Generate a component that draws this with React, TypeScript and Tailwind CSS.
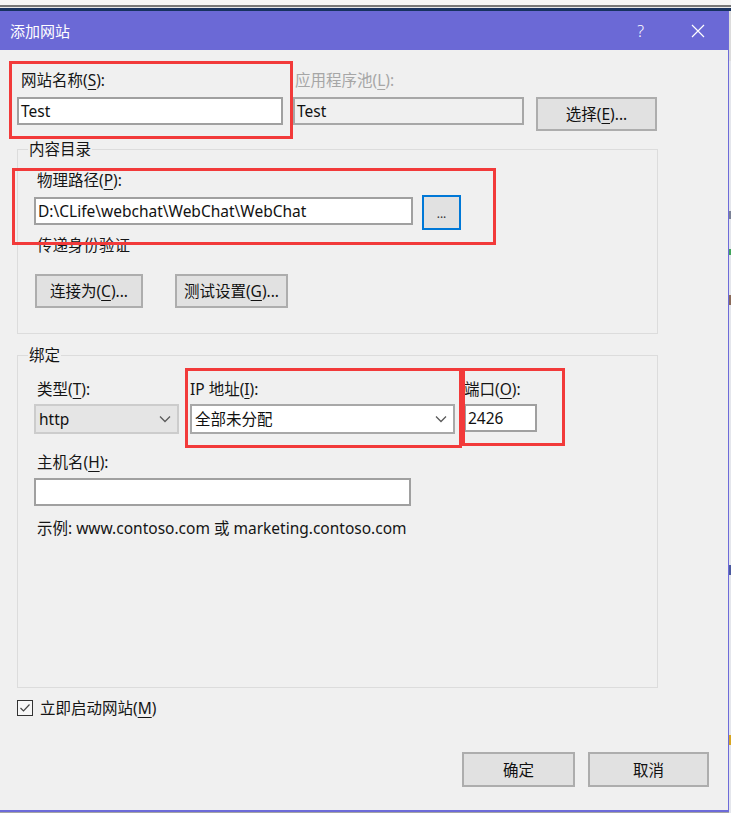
import React from "react";

const U = ({ c }: { c: string }) => (
  <span className="underline decoration-1 underline-offset-[3px]">{c}</span>
);

const Chevron = () => (
  <svg width="12" height="8" viewBox="0 0 12 8" className="shrink-0">
    <polyline points="1,1.5 6,6.5 11,1.5" fill="none" stroke="#5a5a5a" strokeWidth="1.3" />
  </svg>
);

const Btn = ({ w, children, cls = "" }: { w: string; children: React.ReactNode; cls?: string }) => (
  <div
    className={`${w} h-[34px] flex items-center justify-center bg-[#e1e1e1] border-2 border-[#adadad] text-[15.5px] text-[#111] ${cls}`}
  >
    {children}
  </div>
);

export default function App() {
  return (
    <div className="relative w-[731px] h-[813px] overflow-hidden bg-[#f0f0f0] flex flex-col font-['Noto_Sans','Noto_Sans_CJK_SC',sans-serif] text-[15.5px] leading-[20px] text-[#151515]">
      {/* top screen strips */}
      <div className="h-[5px] bg-[#f5f5f5]" />
      <div className="h-[2px] bg-[#777777]" />
      <div className="h-[1px] bg-[#e9e9e9]" />
      <div className="h-[3px] bg-[#17325f]" />

      <div className="flex flex-1 min-h-0">
        <div className="w-[729px] flex flex-col">
          <div className="flex-1 flex flex-col border-r border-b-2 border-[#6d6bd9]">
            {/* title bar */}
            <div className="h-[39px] bg-[#6b69d6] flex items-center pl-[10px] text-white">
              <span className="text-[15px]">添加网站</span>
              <span className="ml-auto mr-[47px] text-[16px] font-light">?</span>
              <svg width="14" height="14" viewBox="0 0 14 14" className="mr-[23px]">
                <path d="M1 1 L13 13 M13 1 L1 13" stroke="#ffffff" strokeWidth="1.2" />
              </svg>
            </div>

            {/* body */}
            <div className="flex-1 flex flex-col pl-[17px] pr-[19px] pt-[20px] bg-[#f0f0f0]">
              {/* site name row */}
              <div className="flex items-start">
                <div className="w-[266px] flex flex-col">
                  <div className="h-[20px] pl-[4px]">
                    网站名称(<U c="S" />):
                  </div>
                  <div className="mt-[7px] h-[28px] bg-white border-2 border-[#a0a0a0] flex items-center pl-[2px] text-[#111]">
                    Test
                  </div>
                </div>
                <div className="ml-[10px] w-[231px] flex flex-col">
                  <div className="h-[20px] pl-[2px] text-[#a6a6a6]">
                    应用程序池(<U c="L" />):
                  </div>
                  <div className="mt-[7px] h-[28px] border-2 border-[#a7a7a7] flex items-center pl-[2px] text-[#111]">
                    Test
                  </div>
                </div>
                <Btn w="w-[121px]" cls="ml-[12px] mt-[27px]">
                  选择(<U c="E" />)...
                </Btn>
              </div>

              {/* 内容目录 group */}
              <div className="relative mt-[18px] w-[641px] h-[185px] border border-[#dcdcdc] pl-[16px] pt-[20px]">
                <span className="absolute -top-[11px] left-[10px] px-[1px] bg-[#f0f0f0]">内容目录</span>
                <div className="h-[20px] pl-[3px]">
                  物理路径(<U c="P" />):
                </div>
                <div className="mt-[5px] flex items-start">
                  <div className="mt-[2px] w-[379px] h-[28px] bg-white border-2 border-[#a0a0a0] flex items-center pl-[2px] text-[#111]">
                    D:\CLife\webchat\WebChat\WebChat
                  </div>
                  <div className="ml-[9px] w-[39px] h-[35px] bg-[#e1e1e1] border-2 border-[#0078d7] flex items-center justify-center text-[12px] leading-none pt-[2px] text-[#333]">
                    ...
                  </div>
                </div>
                <div className="mt-[5px] h-[20px] pl-[3px]">传递身份验证</div>
                <div className="mt-[19px] flex">
                  <Btn w="w-[108px]" cls="ml-[1px]">
                    连接为(<U c="C" />)...
                  </Btn>
                  <Btn w="w-[113px]" cls="ml-[32px]">
                    测试设置(<U c="G" />)...
                  </Btn>
                </div>
              </div>

              {/* 绑定 group */}
              <div className="relative mt-[21px] w-[641px] h-[333px] border border-[#dcdcdc] pl-[16px] pt-[23px]">
                <span className="absolute -top-[11px] left-[10px] px-[1px] bg-[#f0f0f0]">绑定</span>
                <div className="flex items-start">
                  <div className="w-[145px] flex flex-col">
                    <div className="h-[20px] pl-[3px]">
                      类型(<U c="T" />):
                    </div>
                    <div className="mt-[5px] h-[30px] bg-[#e5e5e5] border-2 border-[#cccccc] flex items-center pl-[3px] pr-[6px] text-[#111]">
                      <span className="flex-1">http</span>
                      <Chevron />
                    </div>
                  </div>
                  <div className="ml-[11px] w-[265px] flex flex-col">
                    <div className="h-[20px]">
                      IP 地址(<U c="I" />):
                    </div>
                    <div className="mt-[5px] h-[30px] bg-white border-2 border-[#a8a8a8] flex items-center pl-[3px] pr-[6px] text-[#111]">
                      <span className="flex-1">全部未分配</span>
                      <Chevron />
                    </div>
                  </div>
                  <div className="ml-[9px] w-[73px] flex flex-col">
                    <div className="h-[20px]">
                      端口(<U c="O" />):
                    </div>
                    <div className="mt-[5px] h-[28px] bg-white border-2 border-[#a0a0a0] flex items-center pl-[2px] text-[#111]">
                      2426
                    </div>
                  </div>
                </div>
                <div className="mt-[18px] h-[20px] pl-[3px]">
                  主机名(<U c="H" />):
                </div>
                <div className="mt-[6px] w-[377px] h-[28px] bg-white border-2 border-[#a0a0a0]" />
                <div className="mt-[12px] h-[20px] pl-[3px]">
                  示例: www.contoso.com 或 marketing.contoso.com
                </div>
              </div>

              {/* start site checkbox */}
              <div className="mt-[10px] flex items-center">
                <div className="w-[16px] h-[16px] border border-[#333333] bg-[#f7f7f7] flex items-center justify-center">
                  <svg width="12" height="10" viewBox="0 0 12 10">
                    <polyline points="1.5,5 4.5,8 10.5,1.5" fill="none" stroke="#444" strokeWidth="1.2" />
                  </svg>
                </div>
                <span className="ml-[7px]">
                  立即启动网站(<U c="M" />)
                </span>
              </div>

              {/* OK / Cancel */}
              <div className="mt-[34px] flex justify-end">
                <Btn w="w-[113px]" cls="h-[35px]">确定</Btn>
                <Btn w="w-[121px]" cls="ml-[13px] h-[35px]">取消</Btn>
              </div>
            </div>
          </div>
          <div className="h-[1px] bg-[#a5a5a5]" />
        </div>

        {/* background screen strip */}
        <div className="flex-1 bg-[#e4e6ec] flex flex-col">
          <div className="h-[50px] bg-[#dcdcdc]" />
          <div className="mt-[150px] h-[8px] bg-[#7b8296]" />
          <div className="mt-[30px] h-[6px] bg-[#3fa55a]" />
          <div className="mt-[40px] h-[10px] bg-[#8a6a5a]" />
          <div className="mt-[260px] h-[10px] bg-[#4b5aa0]" />
          <div className="mt-[160px] h-[10px] bg-[#d8a620]" />
        </div>
      </div>

      {/* annotation boxes */}
      <div className="absolute left-[9px] top-[61px] w-[284px] h-[78px] border-[3px] border-[#f23a3a]" />
      <div className="absolute left-[12px] top-[168px] w-[484px] h-[77px] border-[3px] border-[#f23a3a]" />
      <div className="absolute left-[185px] top-[368px] w-[277px] h-[80px] border-[3px] border-[#f23a3a]" />
      <div className="absolute left-[462px] top-[368px] w-[103px] h-[78px] border-[3px] border-[#f23a3a]" />
    </div>
  );
}
